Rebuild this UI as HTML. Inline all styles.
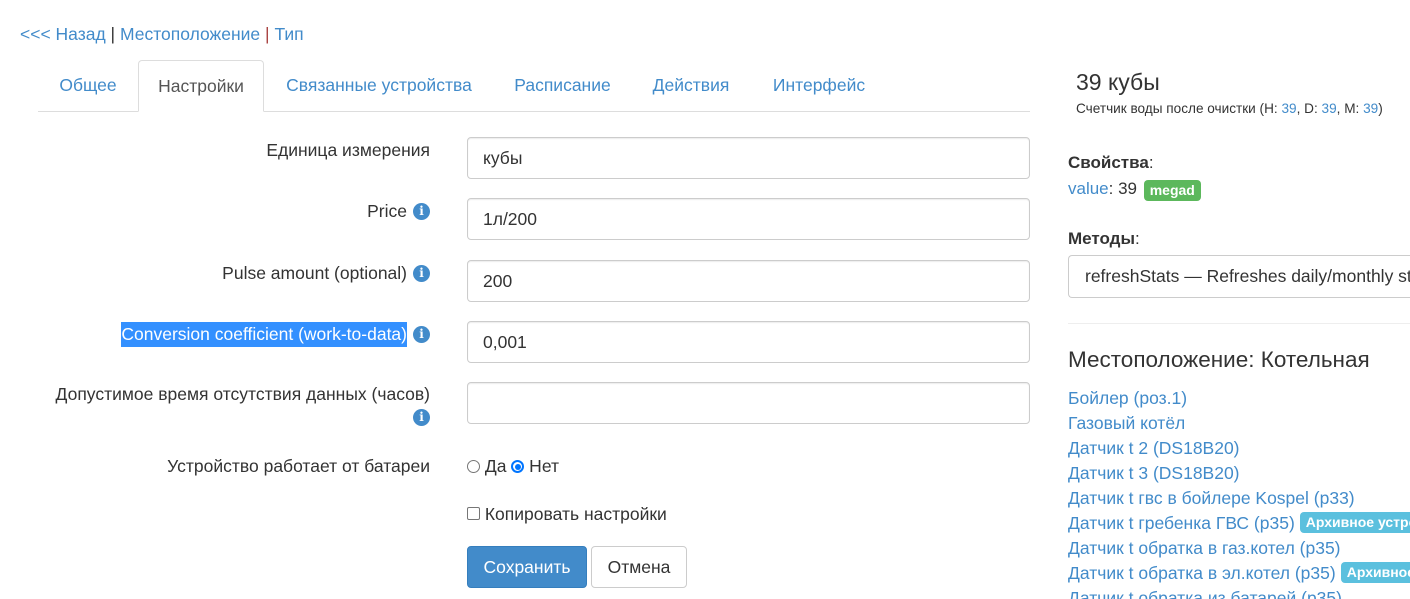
<!DOCTYPE html>
<html><head><meta charset="utf-8"><style>
*{box-sizing:border-box;margin:0;padding:0}
body{width:1410px;height:599px;overflow:hidden;background:#fff;font-family:"Liberation Sans",Arial,sans-serif;font-size:17.5px;color:#333;position:relative}
.a{position:absolute;white-space:nowrap}
.lk{color:#428bca}
.tab{position:absolute;top:60px;height:52px;line-height:50px;font-size:17.5px;color:#428bca;text-align:center}
.lbl{position:absolute;right:980px;text-align:right;font-size:17.5px;white-space:nowrap}
.ic{display:inline-block;width:17px;height:17px;border-radius:50%;background:#428bca;color:#fff;font-size:12px;font-weight:bold;line-height:17px;text-align:center;font-family:"DejaVu Serif",serif;vertical-align:2px;margin-left:6px}
.inp{position:absolute;left:467px;width:563px;height:42px;border:1px solid #ccc;border-radius:4px;padding:0 15px;line-height:40px;font-size:17.5px;box-shadow:inset 0 1px 1px rgba(0,0,0,.075)}
.li{position:absolute;left:1068px;width:342px;overflow:hidden;font-size:17.5px;color:#428bca;white-space:nowrap;line-height:22px;height:22px}
.badge{display:inline-block;background:#5bc0de;color:#fff;font-weight:bold;font-size:14px;padding:0 6px;height:21px;line-height:21px;border-radius:4px;vertical-align:top;margin-left:5px}
#rc{position:absolute;left:0;top:0;width:1410px;height:599px;overflow:hidden}
</style></head><body>
<div class="a" style="left:20px;top:24px;font-size:17.5px"><span class="lk">&lt;&lt;&lt; Назад</span> <span style="color:#333">|</span> <span class="lk">Местоположение</span> <span style="color:#a94442">|</span> <span class="lk">Тип</span></div>

<div class="a" style="left:38px;top:111px;width:992px;height:1px;background:#ddd"></div>
<div class="tab" style="left:38px;width:100px">Общее</div>
<div class="tab" style="left:138px;width:126px;border:1px solid #ddd;border-bottom:1px solid #fff;border-radius:4px 4px 0 0;background:#fff;color:#555">Настройки</div>
<div class="tab" style="left:264px;width:230px">Связанные устройства</div>
<div class="tab" style="left:494px;width:137px">Расписание</div>
<div class="tab" style="left:631px;width:120px">Действия</div>
<div class="tab" style="left:751px;width:136px">Интерфейс</div>

<div class="lbl" style="top:140px">Единица измерения</div>
<div class="inp" style="top:137px">кубы</div>
<div class="lbl" style="top:201px">Price<span class="ic">i</span></div>
<div class="inp" style="top:198px">1л/200</div>
<div class="lbl" style="top:263px">Pulse amount (optional)<span class="ic">i</span></div>
<div class="inp" style="top:260px">200</div>
<div class="lbl" style="top:324px"><span style="background:#3390ff;color:#fff;padding:2px 0 3px">Conversion coefficient (work-to-data)</span><span class="ic">i</span></div>
<div class="inp" style="top:321px">0,001</div>
<div class="lbl" style="top:385px;line-height:18px">Допустимое время отсутствия данных (часов)<br><span class="ic" style="margin-top:6px">i</span></div>
<div class="inp" style="top:382px"></div>
<div class="lbl" style="top:456px">Устройство работает от батареи</div>
<div class="a" style="left:467px;top:456px"><span style="display:inline-block;width:13px;height:13px;border:1px solid #767676;border-radius:50%;vertical-align:-1px"></span> Да <span style="display:inline-block;width:13px;height:13px;border:2px solid #0075ff;border-radius:50%;vertical-align:-1px;position:relative"><span style="position:absolute;left:1.5px;top:1.5px;width:6px;height:6px;border-radius:50%;background:#0075ff"></span></span> Нет</div>
<div class="a" style="left:467px;top:504px"><span style="display:inline-block;width:13px;height:13px;border:1px solid #767676;border-radius:2px;vertical-align:0px"></span> Копировать настройки</div>
<div class="a" style="left:467px;top:546px;width:120px;height:42px;background:#428bca;border:1px solid #357ebd;border-radius:4px;color:#fff;text-align:center;line-height:40px">Сохранить</div>
<div class="a" style="left:591px;top:546px;width:96px;height:42px;background:#fff;border:1px solid #ccc;border-radius:4px;text-align:center;line-height:40px">Отмена</div>

<div id="rc">
<div class="a" style="left:1076px;top:69px;font-size:23px">39 кубы</div>
<div class="a" style="left:1076px;top:101px;font-size:13.6px">Счетчик воды после очистки (H: <span class="lk">39</span>, D: <span class="lk">39</span>, M: <span class="lk">39</span>)</div>
<div class="a" style="left:1068px;top:153px;font-size:17px"><b>Свойства</b>:</div>
<div class="a" style="left:1068px;top:179px;font-size:17px"><span class="lk">value</span>: 39 <span class="badge" style="background:#5cb85c;font-size:14px;vertical-align:-1px;margin-left:2px">megad</span></div>
<div class="a" style="left:1068px;top:229px;font-size:17px"><b>Методы</b>:</div>
<div class="a" style="left:1068px;top:255px;width:342px;height:43px;border:1px solid #ccc;border-right:none;border-radius:4px 0 0 4px;padding-left:16px;line-height:41px;overflow:hidden">refreshStats — Refreshes daily/monthly stats</div>
<div class="a" style="left:1068px;top:323px;width:342px;height:1px;background:#eee"></div>
<div class="a" style="left:1068px;top:347px;font-size:22.5px">Местоположение: Котельная</div>
<div class="li" style="top:387px">Бойлер (роз.1)</div>
<div class="li" style="top:412px">Газовый котёл</div>
<div class="li" style="top:437px">Датчик t 2 (DS18B20)</div>
<div class="li" style="top:462px">Датчик t 3 (DS18B20)</div>
<div class="li" style="top:487px">Датчик t гвс в бойлере Kospel (p33)</div>
<div class="li" style="top:512px">Датчик t гребенка ГВС (p35)<span class="badge">Архивное устройство</span></div>
<div class="li" style="top:537px">Датчик t обратка в газ.котел (p35)</div>
<div class="li" style="top:562px">Датчик t обратка в эл.котел (p35)<span class="badge">Архивное устройство</span></div>
<div class="li" style="top:587px">Датчик t обратка из батарей (p35)</div>
</div>
</body></html>
